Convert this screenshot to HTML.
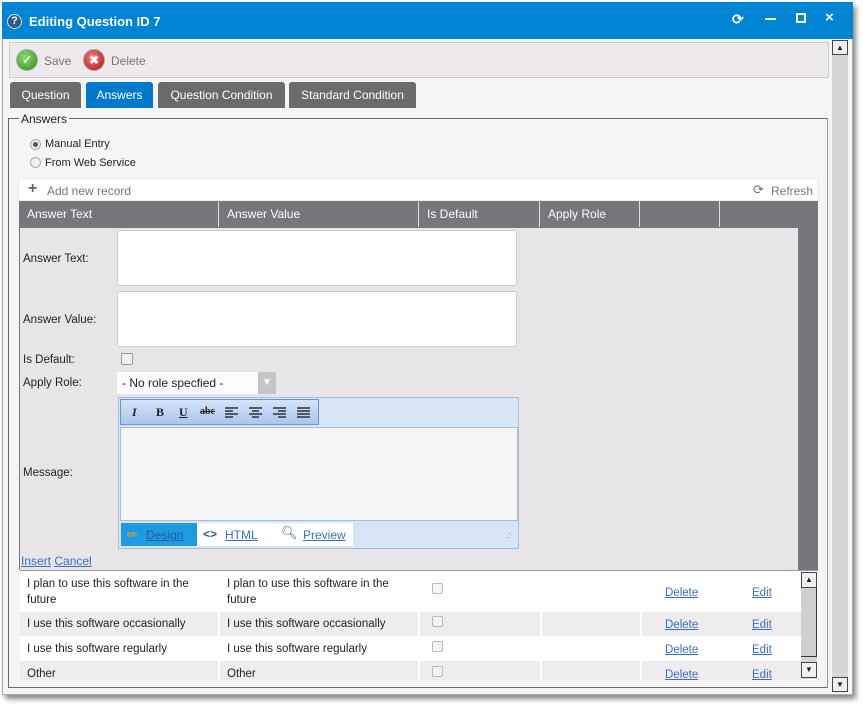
<!DOCTYPE html>
<html><head><meta charset="utf-8"><style>
*{box-sizing:border-box;margin:0;padding:0}
body{width:863px;height:709px;background:#fff;font-family:"Liberation Sans",sans-serif;font-size:12px;color:#222;position:relative;overflow:hidden}
.a{position:absolute}
.tab{position:absolute;top:82px;height:26px;background:#6b6b6e;color:#fff;font-size:12px;line-height:26px;text-align:center;border-radius:3px 3px 0 0}
.th{position:absolute;top:201px;height:26px;line-height:26px;color:#fff;font-size:12px;padding-left:8px;border-right:1px solid #ddd}
.lbl{position:absolute;left:23px;font-size:11.5px}
.ta{position:absolute;left:117px;width:400px;height:56px;background:#fff;border:1px solid #ccc;border-radius:3px}
.lnk{color:#3a6fc0;text-decoration:underline}
.row{position:absolute;left:20px;width:781px}
.cell{position:absolute;font-size:11.5px;line-height:16px}
.cb{position:absolute;left:432px;width:11px;height:11px;border:1px solid #bbb;border-radius:2px;background:#f4f4f4}
.vs{position:absolute;top:0;bottom:0;width:2px;background:#fff}
.al{position:absolute;top:7px;width:13px;height:11px}
</style></head><body>
<div class="a" style="left:2px;top:2px;width:851px;height:693px;background:#f5f5f5;box-shadow:3px 4px 5px #888;border:1px solid #aaa"></div>
<div class="a" style="left:2px;top:2px;width:851px;height:37px;background:#0085d5"></div>
<div class="a" style="left:7px;top:14px;width:15px;height:15px;border-radius:50%;background:#2a5d8a;border:1.5px solid #ddd;color:#fff;font-size:11px;font-weight:bold;text-align:center;line-height:12px">?</div>
<div class="a" style="left:29px;top:14px;color:#fff;font-weight:bold;font-size:13px">Editing Question ID 7</div>
<div class="a" style="left:732px;top:11px;color:#fff;font-size:14px;font-weight:bold">⟳</div>
<div class="a" style="left:765px;top:18px;width:11px;height:2px;background:#fff"></div>
<div class="a" style="left:796px;top:13px;width:10px;height:10px;border:2px solid #fff"></div>
<div class="a" style="left:825px;top:9px;color:#fff;font-size:15px;font-weight:bold">×</div>
<div class="a" style="left:832px;top:40px;width:16px;height:652px;background:#d6d6d6"></div>
<div class="a" style="left:832px;top:40px;width:16px;height:15px;background:#f0f0f0;border:1px solid #444;font-size:8px;text-align:center;line-height:13px">▲</div>
<div class="a" style="left:832px;top:677px;width:16px;height:15px;background:#f0f0f0;border:1px solid #444;font-size:8px;text-align:center;line-height:13px">▼</div>
<div class="a" style="left:9px;top:42px;width:820px;height:36px;background:#ede9ec;border:1px solid #ccc"></div>
<div class="a" style="left:16px;top:49px;width:22px;height:22px;border-radius:50%;background:radial-gradient(circle at 40% 35%,#8fd96b,#2f8a1c);border:1px solid #aaa;color:#fff;text-align:center;line-height:21px;font-weight:bold">✓</div>
<div class="a" style="left:44px;top:54px;color:#777;font-size:12px">Save</div>
<div class="a" style="left:83px;top:49px;width:22px;height:22px;border-radius:50%;background:radial-gradient(circle at 40% 35%,#f37a7a,#b01010);border:1px solid #aaa;color:#fff;text-align:center;line-height:21px;font-weight:bold">✖</div>
<div class="a" style="left:111px;top:54px;color:#777;font-size:12px">Delete</div>
<div class="tab" style="left:10px;width:71px">Question</div>
<div class="tab" style="left:86px;width:67px;background:#0078cc">Answers</div>
<div class="tab" style="left:158px;width:127px">Question Condition</div>
<div class="tab" style="left:289px;width:127px">Standard Condition</div>
<div class="a" style="left:8px;top:118px;width:820px;height:570px;border:1px solid #666;border-right-color:#999"></div>
<div class="a" style="left:19px;top:112px;background:#f5f5f5;padding:0 2px;font-size:12px">Answers</div>
<div class="a" style="left:30px;top:139px;width:11px;height:11px;border-radius:50%;border:1px solid #aaa;background:#eee"><div style="width:5px;height:5px;border-radius:50%;background:#555;margin:2px"></div></div>
<div class="a" style="left:45px;top:138px;font-size:11px">Manual Entry</div>
<div class="a" style="left:30px;top:157px;width:11px;height:11px;border-radius:50%;border:1px solid #aaa;background:#eee"></div>
<div class="a" style="left:45px;top:157px;font-size:11px">From Web Service</div>
<div class="a" style="left:18px;top:178px;width:800px;height:23px;background:#fff;border:1px solid #eee"></div>
<div class="a" style="left:28px;top:180px;color:#666;font-size:16px;font-weight:bold">+</div>
<div class="a" style="left:47px;top:184px;color:#777">Add new record</div>
<div class="a" style="left:753px;top:182px;color:#777;font-size:13px">⟳</div>
<div class="a" style="left:771px;top:184px;color:#777">Refresh</div>
<div class="a" style="left:19px;top:201px;width:799px;height:369px;background:#77777b"></div>
<div class="th" style="left:19px;width:200px">Answer Text</div>
<div class="th" style="left:219px;width:200px">Answer Value</div>
<div class="th" style="left:419px;width:121px">Is Default</div>
<div class="th" style="left:540px;width:100px">Apply Role</div>
<div class="th" style="left:640px;width:80px"></div>
<div class="a" style="left:20px;top:228px;width:778px;height:342px;background:#e8e5e8"></div>
<div class="lbl" style="top:253px">Answer Text:</div>
<div class="ta" style="top:230px"></div>
<div class="lbl" style="top:314px">Answer Value:</div>
<div class="ta" style="top:291px"></div>
<div class="lbl" style="top:354px">Is Default:</div>
<div class="a" style="left:121px;top:353px;width:12px;height:12px;border:1px solid #999;border-radius:2px;background:#f0f0f0"></div>
<div class="lbl" style="top:377px">Apply Role:</div>
<div class="a" style="left:117px;top:372px;width:141px;height:22px;background:#fdfbfd;font-size:12px;line-height:22px;padding-left:5px">- No role specfied -</div>
<div class="a" style="left:258px;top:372px;width:18px;height:22px;background:#c6c4c6;color:#fff;font-size:10px;text-align:center;line-height:22px">▼</div>
<div class="lbl" style="top:467px">Message:</div>
<div class="a" style="left:118px;top:397px;width:401px;height:152px;background:#d6e6f6;border:1px solid #a9bdd4"></div>
<div class="a" style="left:120px;top:399px;width:199px;height:26px;background:linear-gradient(#d4e4f8,#a9c6ec);border:1px solid #6f93c8;font-family:'Liberation Serif',serif;font-size:12px;font-weight:bold;line-height:24px">
<span style="position:absolute;left:11px;font-style:italic">I</span><span style="position:absolute;left:35px">B</span><span style="position:absolute;left:58px;text-decoration:underline">U</span><span style="position:absolute;left:79px;font-size:10px;text-decoration:line-through">abc</span>
<svg class="al" style="left:104px" viewBox="0 0 13 11"><path d="M0 1h13M0 4h8M0 7h13M0 10h8" stroke="#111" stroke-width="1.2"/></svg>
<svg class="al" style="left:128px" viewBox="0 0 13 11"><path d="M0 1h13M3 4h7M0 7h13M3 10h7" stroke="#111" stroke-width="1.2"/></svg>
<svg class="al" style="left:152px" viewBox="0 0 13 11"><path d="M0 1h13M5 4h8M0 7h13M5 10h8" stroke="#111" stroke-width="1.2"/></svg>
<svg class="al" style="left:176px" viewBox="0 0 13 11"><path d="M0 1h13M0 4h13M0 7h13M0 10h13" stroke="#111" stroke-width="1.2"/></svg></div>
<div class="a" style="left:120px;top:427px;width:398px;height:94px;background:#f6f6f6;border:1px solid #a9bdd4"></div>
<div class="a" style="left:121px;top:523px;width:232px;height:23px;background:#fff"></div>
<div class="a" style="left:121px;top:523px;width:76px;height:23px;background:#1e9ae0"></div>
<div class="a" style="left:127px;top:527px;color:#f0a020;font-size:13px">✏</div>
<div class="a lnk" style="left:146px;top:528px;color:#2a5aa0">Design</div>
<div class="a" style="left:203px;top:527px;color:#2a5aa0;font-weight:bold">&lt;&gt;</div>
<div class="a lnk" style="left:225px;top:528px">HTML</div>
<div class="a" style="left:281px;top:525px;color:#2a7a2a;font-size:13px">🔍︎</div>
<div class="a lnk" style="left:303px;top:528px">Preview</div>
<div class="a" style="left:506px;top:530px;color:#6f93c8;font-size:9px">.:</div>
<div class="a" style="left:21px;top:554px"><span class="lnk">Insert</span> <span class="lnk">Cancel</span></div>
<div class="a" style="left:20px;top:570px;width:798px;height:110px;background:#fff;border-top:1px solid #999"></div>
<div class="row" style="top:612px;height:24px;background:#efecee"><div class="vs" style="left:198px"></div><div class="vs" style="left:398px"></div><div class="vs" style="left:520px"></div><div class="vs" style="left:620px"></div></div>
<div class="row" style="top:661px;height:19px;background:#efecee"><div class="vs" style="left:198px"></div><div class="vs" style="left:398px"></div><div class="vs" style="left:520px"></div><div class="vs" style="left:620px"></div></div>
<div class="cell" style="left:27px;top:576px">I plan to use this software in the<br>future</div>
<div class="cell" style="left:227px;top:576px">I plan to use this software in the<br>future</div>
<div class="cb" style="top:583px"></div>
<div class="cell lnk" style="left:665px;top:585px">Delete</div><div class="cell lnk" style="left:752px;top:585px">Edit</div>
<div class="cell" style="left:27px;top:616px">I use this software occasionally</div>
<div class="cell" style="left:227px;top:616px">I use this software occasionally</div>
<div class="cb" style="top:616px"></div>
<div class="cell lnk" style="left:665px;top:617px">Delete</div><div class="cell lnk" style="left:752px;top:617px">Edit</div>
<div class="cell" style="left:27px;top:641px">I use this software regularly</div>
<div class="cell" style="left:227px;top:641px">I use this software regularly</div>
<div class="cb" style="top:641px"></div>
<div class="cell lnk" style="left:665px;top:642px">Delete</div><div class="cell lnk" style="left:752px;top:642px">Edit</div>
<div class="cell" style="left:27px;top:666px;height:14px;overflow:hidden">Other</div>
<div class="cell" style="left:227px;top:666px;height:14px;overflow:hidden">Other</div>
<div class="cb" style="top:666px"></div>
<div class="cell lnk" style="left:665px;top:667px;height:13px;overflow:hidden">Delete</div><div class="cell lnk" style="left:752px;top:667px;height:13px;overflow:hidden">Edit</div>
<div class="a" style="left:801px;top:572px;width:16px;height:107px;background:#d6d6d6"></div>
<div class="a" style="left:801px;top:572px;width:16px;height:16px;background:#f0f0f0;border:1px solid #444;font-size:8px;text-align:center;line-height:14px">▲</div>
<div class="a" style="left:801px;top:588px;width:16px;height:69px;background:#d0d0d0;border:1px solid #333;border-top:none;border-left:none"></div>
<div class="a" style="left:801px;top:662px;width:16px;height:16px;background:#f0f0f0;border:1px solid #444;font-size:8px;text-align:center;line-height:14px">▼</div>
</body></html>
